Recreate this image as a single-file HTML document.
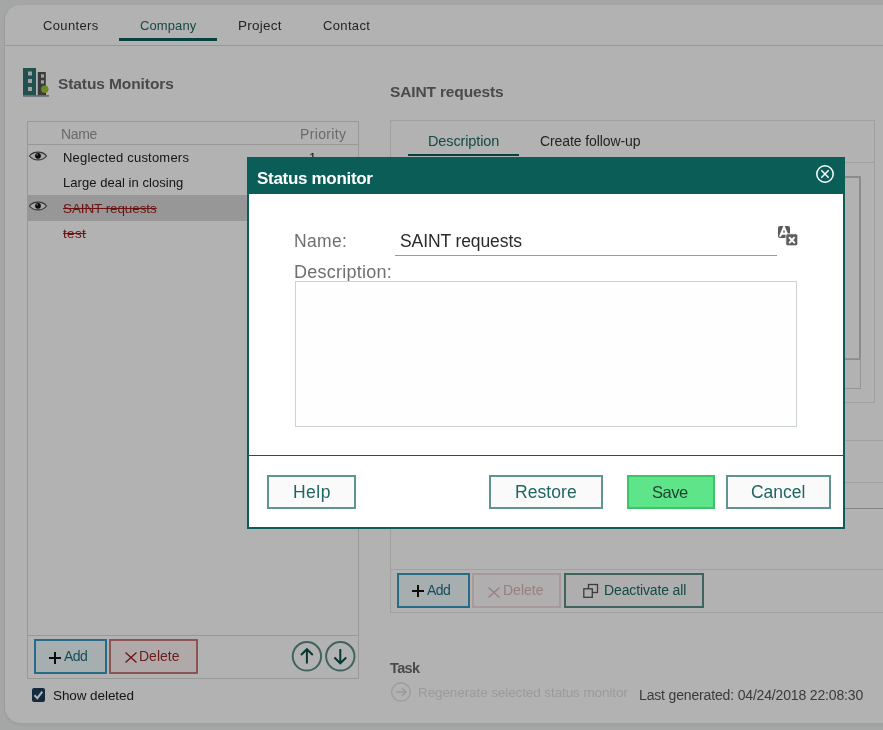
<!DOCTYPE html>
<html><head><meta charset="utf-8">
<style>
*{margin:0;padding:0;box-sizing:border-box}
html,body{width:883px;height:730px;overflow:hidden}
body{background:#ebefee;font-family:"Liberation Sans",sans-serif;position:relative}
.t{position:absolute;white-space:nowrap;line-height:1;will-change:transform}
.r{position:absolute}
svg{position:absolute;overflow:visible}
</style></head><body>
<div class="r" style="left:5px;top:5px;width:1000px;height:718px;background:#fff;border-radius:15px 0 0 15px;box-shadow:0 3px 2px rgba(0,0,0,0.03),-1px 0 1px rgba(0,0,0,0.05)"></div>
<div class="r" style="left:5px;top:45px;width:1000px;height:1px;background:#dadada"></div>
<div class="t" style="left:42.8px;top:19.0px;font-size:13px;letter-spacing:0.36px;font-weight:400;color:#333;">Counters</div>
<div class="t" style="left:140.3px;top:19.0px;font-size:13px;letter-spacing:0.1px;font-weight:400;color:#1f6b64;">Company</div>
<div class="r" style="left:119px;top:38px;width:98px;height:3px;background:#0b5e57"></div>
<div class="t" style="left:237.6px;top:19.0px;font-size:13.5px;letter-spacing:0.23px;font-weight:400;color:#333;">Project</div>
<div class="t" style="left:322.7px;top:19.0px;font-size:13px;letter-spacing:0.35px;font-weight:400;color:#333;">Contact</div>
<svg style="left:0;top:0" width="60" height="100">
<rect x="23" y="68" width="13" height="27" fill="#2d7670"/>
<rect x="28" y="71.5" width="4" height="4" fill="#e8e8e8"/>
<rect x="28" y="79" width="4" height="4" fill="#e8e8e8"/>
<rect x="28" y="87" width="4" height="4" fill="#e8e8e8"/>
<rect x="37.8" y="72" width="8" height="23" fill="#555"/>
<rect x="41" y="74.3" width="3" height="3.3" fill="#e8e8e8"/>
<rect x="41" y="80.3" width="3" height="3.3" fill="#e8e8e8"/>
<rect x="44" y="91.5" width="2" height="3.5" fill="#7a3a1a"/>
<circle cx="44.8" cy="89.2" r="3.7" fill="#9cc63a"/>
<rect x="23" y="95" width="26" height="1.8" fill="#8d9cab"/>
</svg>
<div class="t" style="left:58.0px;top:76.0px;font-size:15.5px;letter-spacing:-0.09px;font-weight:700;color:#6a6a6a;">Status Monitors</div>
<div class="r" style="left:27px;top:121px;width:332px;height:558px;border:1px solid #dadada"></div>
<div class="r" style="left:28px;top:144px;width:330px;height:1px;background:#dadada"></div>
<div class="t" style="left:60.8px;top:127.0px;font-size:14px;letter-spacing:-0.33px;font-weight:400;color:#999;">Name</div>
<div class="t" style="left:300.0px;top:127.0px;font-size:14px;letter-spacing:0.36px;font-weight:400;color:#999;">Priority</div>
<div class="r" style="left:28px;top:195px;width:330px;height:26px;background:#d9d9d9"></div>
<svg style="left:28px;top:149.5px" width="20" height="12" viewBox="0 0 20 12">
<path d="M1.5,6 C5,0.8 15,0.8 18.5,6 C15,11.2 5,11.2 1.5,6 Z" fill="#f0f0f0" stroke="#4a4a4a" stroke-width="1.1"/>
<circle cx="10" cy="5.8" r="2.9" fill="#111"/><circle cx="9.2" cy="4.8" r="0.7" fill="#ccc"/>
</svg>
<svg style="left:28px;top:200px" width="20" height="12" viewBox="0 0 20 12">
<path d="M1.5,6 C5,0.8 15,0.8 18.5,6 C15,11.2 5,11.2 1.5,6 Z" fill="#f0f0f0" stroke="#4a4a4a" stroke-width="1.1"/>
<circle cx="10" cy="5.8" r="2.9" fill="#111"/><circle cx="9.2" cy="4.8" r="0.7" fill="#ccc"/>
</svg>
<div class="t" style="left:63.4px;top:151.0px;font-size:13px;letter-spacing:0.21px;font-weight:400;color:#222;">Neglected customers</div>
<div class="t" style="left:309.0px;top:151.0px;font-size:13px;letter-spacing:0px;font-weight:400;color:#222;">1</div>
<div class="t" style="left:63.4px;top:176.0px;font-size:13px;letter-spacing:0.05px;font-weight:400;color:#222;">Large deal in closing</div>
<div class="t" style="left:63.0px;top:202.0px;font-size:13.5px;letter-spacing:-0.1px;font-weight:400;color:#9b1a1a;text-decoration:line-through">SAINT requests</div>
<div class="t" style="left:63.4px;top:226.5px;font-size:13.5px;letter-spacing:0.35px;font-weight:400;color:#9b1a1a;text-decoration:line-through">test</div>
<div class="r" style="left:28px;top:635px;width:330px;height:1px;background:#dadada"></div>
<div class="r" style="left:34px;top:639px;width:73px;height:35px;border:2px solid #3a9ac0;background:#f0f9fc"></div>
<svg style="left:49px;top:652px" width="12" height="12"><path d="M6,0V12M0,6H12" stroke="#111" stroke-width="2"/></svg>
<div class="t" style="left:63.7px;top:649.0px;font-size:14px;letter-spacing:-0.52px;font-weight:400;color:#1f6f7e;">Add</div>
<div class="r" style="left:109px;top:639px;width:89px;height:35px;border:2px solid #c77a7a;background:#fbf3f3"></div>
<svg style="left:125px;top:652px" width="12" height="11"><path d="M0.5,0.5L11.5,10.5M11.5,0.5L0.5,10.5" stroke="#9b1a1a" stroke-width="1.3"/></svg>
<div class="t" style="left:139.3px;top:649.0px;font-size:14px;letter-spacing:0.01px;font-weight:400;color:#9e2a2a;">Delete</div>
<svg style="left:290px;top:639px" width="70" height="35">
<circle cx="16.9" cy="17.3" r="14.2" fill="none" stroke="#5b8e89" stroke-width="2"/>
<path d="M16.9,10V24.5M11,16L16.9,10.2L22.8,16" fill="none" stroke="#0b4f48" stroke-width="2"/>
<circle cx="50.3" cy="17.3" r="14.2" fill="none" stroke="#5b8e89" stroke-width="2"/>
<path d="M50.3,10V24.5M44.4,18.5L50.3,24.3L56.2,18.5" fill="none" stroke="#0b4f48" stroke-width="2"/>
</svg>
<div class="r" style="left:32px;top:688px;width:13px;height:14px;background:#1f3d5a;border-radius:2px"></div>
<svg style="left:32px;top:688px" width="13" height="14"><path d="M2.5,7.3L5.3,10.2L10.3,3.6" fill="none" stroke="#fff" stroke-width="2"/></svg>
<div class="t" style="left:53.0px;top:689.0px;font-size:13.5px;letter-spacing:-0.08px;font-weight:400;color:#222;">Show deleted</div>
<div class="t" style="left:389.5px;top:84.0px;font-size:15.5px;letter-spacing:-0.14px;font-weight:700;color:#6a6a6a;">SAINT requests</div>
<div class="r" style="left:390px;top:120px;width:485px;height:283px;border:1px solid #e6e6e6"></div>
<div class="r" style="left:391px;top:162px;width:483px;height:1px;background:#e6e6e6"></div>
<div class="t" style="left:428.2px;top:134.0px;font-size:14.5px;letter-spacing:-0.13px;font-weight:400;color:#1f6b64;">Description</div>
<div class="r" style="left:408px;top:154px;width:111px;height:2px;background:#0b5e57"></div>
<div class="t" style="left:539.7px;top:134.0px;font-size:14px;letter-spacing:-0.09px;font-weight:400;color:#333;">Create follow-up</div>
<div class="r" style="left:800px;top:176px;width:61px;height:184px;border:2px solid #c5cccb;border-left:none"></div>
<div class="r" style="left:800px;top:358px;width:61px;height:31px;border:1px solid #d6d6d6;border-left:none"></div>
<div class="r" style="left:390px;top:440px;width:600px;height:173px;border:1px solid #e6e6e6"></div>
<div class="r" style="left:391px;top:482px;width:600px;height:1px;background:#e6e6e6"></div>
<div class="r" style="left:391px;top:508px;width:600px;height:1px;background:#bdbdbd"></div>
<div class="r" style="left:391px;top:569px;width:600px;height:1px;background:#e6e6e6"></div>
<div class="r" style="left:397px;top:573px;width:73px;height:35px;border:2px solid #3a9ac0;background:#f0f9fc"></div>
<svg style="left:412px;top:585px" width="12" height="12"><path d="M6,0V12M0,6H12" stroke="#111" stroke-width="2"/></svg>
<div class="t" style="left:426.5px;top:583.0px;font-size:14px;letter-spacing:-0.52px;font-weight:400;color:#236f85;">Add</div>
<div class="r" style="left:472px;top:573px;width:89px;height:35px;border:2px solid #efdcdc;background:#fdf9f9"></div>
<svg style="left:488px;top:587px" width="12" height="11"><path d="M0.5,0.5L11.5,10.5M11.5,0.5L0.5,10.5" stroke="#d9b7b7" stroke-width="1.3"/></svg>
<div class="t" style="left:502.6px;top:583.0px;font-size:14px;letter-spacing:0.01px;font-weight:400;color:#d9b7b7;">Delete</div>
<div class="r" style="left:564px;top:573px;width:140px;height:35px;border:2px solid #5b8e89;background:#fafafa"></div>
<svg style="left:583px;top:584px" width="16" height="14"><rect x="5.5" y="0.5" width="9" height="8" fill="none" stroke="#555" stroke-width="1.3"/><rect x="0.8" y="4.8" width="8.5" height="8.5" fill="#fafafa" stroke="#555" stroke-width="1.3"/></svg>
<div class="t" style="left:603.9px;top:583.0px;font-size:14px;letter-spacing:-0.13px;font-weight:400;color:#1f6b64;">Deactivate all</div>
<div class="t" style="left:389.8px;top:661.0px;font-size:14.5px;letter-spacing:-0.63px;font-weight:700;color:#6a6a6a;">Task</div>
<svg style="left:390px;top:681px" width="22" height="22"><circle cx="11" cy="11" r="9.3" fill="none" stroke="#e2e2e2" stroke-width="1.5"/><path d="M6,11H16M12,7L16,11L12,15" fill="none" stroke="#dcdcdc" stroke-width="1.5"/></svg>
<div class="t" style="left:417.9px;top:686.0px;font-size:13.5px;letter-spacing:-0.1px;font-weight:400;color:#dedede;">Regenerate selected status monitor</div>
<div class="t" style="left:639.0px;top:688.0px;font-size:14px;letter-spacing:-0.16px;font-weight:400;color:#555;">Last generated: 04/24/2018 22:08:30</div>
<div class="r" style="left:0px;top:0px;width:883px;height:730px;background:rgba(0,0,0,0.3)"></div>
<div class="r" style="left:247px;top:157px;width:598px;height:372px;background:#fff;border:2px solid #0b5e57"></div>
<div class="r" style="left:247px;top:157px;width:598px;height:37px;background:#0b5e57"></div>
<div class="t" style="left:257.0px;top:170.0px;font-size:17px;letter-spacing:-0.31px;font-weight:700;color:#fff;">Status monitor</div>
<svg style="left:815px;top:164px" width="20" height="20"><circle cx="10" cy="10" r="8.2" fill="none" stroke="#fff" stroke-width="1.5"/><path d="M6.3,6.3L13.7,13.7M13.7,6.3L6.3,13.7" stroke="#fff" stroke-width="1.5"/></svg>
<div class="t" style="left:293.8px;top:232.7px;font-size:17.5px;letter-spacing:0.33px;font-weight:400;color:#6f6f6f;">Name:</div>
<div class="t" style="left:399.5px;top:232.7px;font-size:17.5px;letter-spacing:-0.1px;font-weight:400;color:#2b2b2b;">SAINT requests</div>
<div class="r" style="left:395px;top:255px;width:382px;height:1px;background:#9a9a9a"></div>
<svg style="left:777px;top:225px" width="22" height="22">
<rect x="1" y="1" width="12" height="12" rx="2" fill="#5a5a5a"/>
<path d="M3,11.6L7,2.2L11,11.6M4.4,8.6H9.6" fill="none" stroke="#fff" stroke-width="2.1"/>
<rect x="8.8" y="8.8" width="12" height="12" rx="2" fill="#5e5e5e" stroke="#fff" stroke-width="0.8"/>
<path d="M12,12.2L17.8,18.2M17.6,12.2L12.2,18.2" stroke="#fff" stroke-width="1.9"/>
</svg>
<div class="t" style="left:294.2px;top:263.0px;font-size:18px;letter-spacing:0.25px;font-weight:400;color:#6f6f6f;">Description:</div>
<div class="r" style="left:295px;top:281px;width:502px;height:146px;border:1px solid #cdd3d1;background:#fefefe"></div>
<div class="r" style="left:249px;top:455px;width:594px;height:1px;background:#0b5e57"></div>
<div class="r" style="left:267px;top:475px;width:89px;height:34px;border:2px solid #5f9490;background:#fafafa"></div>
<div class="t" style="left:292.9px;top:483.6px;font-size:17.5px;letter-spacing:0.46px;font-weight:400;color:#1e6661;">Help</div>
<div class="r" style="left:489px;top:475px;width:114px;height:34px;border:2px solid #5f9490;background:#fafafa"></div>
<div class="t" style="left:515.3px;top:483.6px;font-size:17.5px;letter-spacing:0.07px;font-weight:400;color:#1e6661;">Restore</div>
<div class="r" style="left:627px;top:475px;width:88px;height:34px;border:2px solid #3cc466;background:#5ee58a"></div>
<div class="t" style="left:652.1px;top:483.6px;font-size:16.5px;letter-spacing:-0.47px;font-weight:400;color:#1f3f33;">Save</div>
<div class="r" style="left:726px;top:475px;width:105px;height:34px;border:2px solid #5f9490;background:#fafafa"></div>
<div class="t" style="left:751.0px;top:483.6px;font-size:17.5px;letter-spacing:-0.02px;font-weight:400;color:#1e6661;">Cancel</div>
</body></html>
